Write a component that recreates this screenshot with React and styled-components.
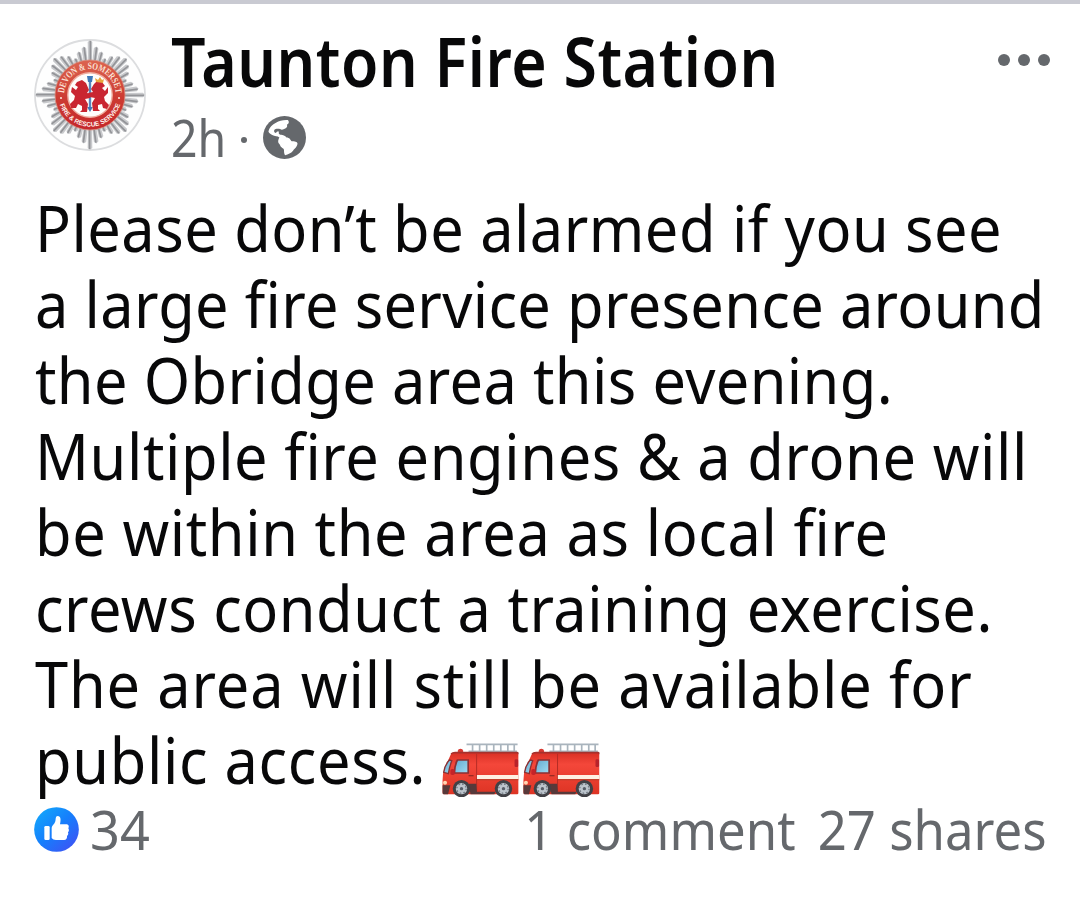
import styled, { createGlobalStyle } from "styled-components";

const COLORS = {
  text: "#080809",
  muted: "#65686c",
  divider: "#c9cad2",
};

const POST_LINES = [
  { text: "Please don’t be alarmed if you see", tracking: 0.5 },
  { text: "a large fire service presence around", tracking: 0.34 },
  { text: "the Obridge area this evening.", tracking: 0.39 },
  { text: "Multiple fire engines & a drone will", tracking: 0.64 },
  { text: "be within the area as local fire", tracking: 0.64 },
  { text: "crews conduct a training exercise.", tracking: 0.55 },
  { text: "The area will still be available for", tracking: 0.92 },
  { text: "public access. ", tracking: 0.72, engines: 2 },
];

// Rays of the badge, in eight stepped clusters of six
const RAY_COUNT = 48;
const RAY_LENGTHS = [52, 49, 45, 40, 45, 49];

const BadgeLogo = () => (
  <svg width="112" height="112" viewBox="-56 -56 112 112" aria-label="Devon & Somerset Fire & Rescue Service">
    <defs>
      <path id="badge-top" d="M-25.6 3 A25.8 25.8 0 1 1 25.6 3" />
      <path id="badge-bottom" d="M-31.6 0 A31.6 31.6 0 0 0 31.6 0" />
      <linearGradient id="badge-ring" x1="0" y1="0" x2="0" y2="1">
        <stop offset="0" stopColor="#dc6450" />
        <stop offset="0.55" stopColor="#cc3b32" />
        <stop offset="1" stopColor="#c5272b" />
      </linearGradient>
    </defs>
    <circle r="55" fill="#fefefe" stroke="#dcdddf" strokeWidth="1.8" />
    {Array.from({ length: RAY_COUNT }, (_, i) => {
      const length = i % 12 === 0 ? 55 : RAY_LENGTHS[i % 6];
      return (
        <g key={i} transform={`rotate(${(i * 360) / RAY_COUNT})`}>
          <path d={`M-2 -30 L-2.3 ${2 - length} L0 ${-length} L2.3 ${2 - length} L2 -30Z`} fill="#c9cacd" />
          <path d={`M0.4 -30 V${1 - length}`} stroke="#939498" strokeWidth="1.7" />
        </g>
      );
    })}
    <circle r="35" fill="url(#badge-ring)" stroke="#d98a7b" strokeWidth="0.8" />
    <circle r="22.2" fill="#fffdfb" stroke="#efaea0" strokeWidth="1.4" />
    <text fill="#fbe0d4" fontFamily="Liberation Serif, serif" fontWeight="700" fontSize="9.6" textAnchor="middle">
      <textPath href="#badge-top" startOffset="50%" textLength="78" lengthAdjust="spacingAndGlyphs">DEVON &amp; SOMERSET</textPath>
    </text>
    <text fill="#fff4ef" fontFamily="Liberation Sans, sans-serif" fontWeight="700" fontSize="6.6" textAnchor="middle">
      <textPath href="#badge-bottom" startOffset="50%" textLength="80" lengthAdjust="spacingAndGlyphs">FIRE &amp; RESCUE SERVICE</textPath>
    </text>
    <circle cx="-29" cy="3" r="1.1" fill="#fbe0d4" />
    <circle cx="29" cy="3" r="1.1" fill="#fbe0d4" />
    <path d="M0 -19 V15" stroke="#5686bd" strokeWidth="2.4" />
    <path d="M-3 -19 h6 l-1 6 h-4z M-2.8 12 h5.6 l-2.8 5z" fill="#3f79b8" />
    <path d="M-4 -12 l-4 -3 -5 2 -2 3 3 2 -2 3 -4 -3 -1 5 4 4 -1 4 -4 4 1 4 5 0 2 -4 4 2 0 4 -2 2 7 0 1 -8 -3 -5 5 -1 2 -4 -5 -1 2 -3z" fill="#c92531" />
    <path d="M4 -11 l3 -3 5 1 3 4 -3 2 3 3 3 -4 0 6 -4 4 1 4 4 4 -2 4 -4 -1 -1 -4 -4 1 0 4 2 2 -7 0 -1 -8 3 -5 -5 -1 -2 -4 5 -1 -2 -3z" fill="#c92531" />
    <path d="M6 -13 l-1 -4 3 2 2 -3 2 3 2 -1 -1 4z" fill="#eaa63c" />
  </svg>
);

const GlobeIcon = () => (
  <svg width="43" height="43" viewBox="0 0 126 126" aria-label="Public">
    <circle cx="63" cy="63" r="63" fill={COLORS.muted} />
    <path
      d="M73 12C77 16 77 22 70 26C73 31 69 36 62 38C57 40 55 42 50 38C44 37 35 37 33 41C31 46 35 50 38 50C39 46 43 44 47 46C45 50 46 53 51 55C56 54 64 57 69 63C78 63 80 70 84 74C93 74 100 75 101 80C101 91 93 94 88 102C82 110 74 112 65 115C60 109 63 100 60 96C50 90 51 86 48 82C42 76 45 69 48 63C43 58 34 61 27 56C22 51 18 51 16 46C18 34 28 25 38 20C48 14 59 11 73 12Z"
      fill="white"
    />
  </svg>
);

const LikeIcon = () => (
  <svg width="45" height="45" viewBox="0 0 135 135" aria-label="Like">
    <defs>
      <linearGradient id="like-fill" x1="0.1" y1="0.1" x2="0.85" y2="0.9">
        <stop offset="0" stopColor="#13a4fb" />
        <stop offset="0.5" stopColor="#167efc" />
        <stop offset="1" stopColor="#3a57f5" />
      </linearGradient>
    </defs>
    <circle cx="67.5" cy="67.5" r="67" fill="url(#like-fill)" />
    <rect x="31" y="57" width="16" height="42" rx="4" fill="white" />
    <path
      d="M53 93V62C53 57 62 51 64 43C66 36 64 27 71 27C81 27 81 38 78 52H97C104 52 106 59 103 64C106 69 105 73 102 76C104 81 102 85 99 87C100 94 97 99 90 99H66C60 99 56 97 53 93Z"
      fill="white"
    />
  </svg>
);

const FireEngine = () => (
  <Engine viewBox="0 0 227 162" preserveAspectRatio="none" aria-label="fire engine">
    <defs>
      <linearGradient id="engine-body" x1="0" y1="0" x2="0" y2="1">
        <stop offset="0" stopColor="#d93025" />
        <stop offset="0.28" stopColor="#f4473a" />
        <stop offset="1" stopColor="#dd3424" />
      </linearGradient>
      <linearGradient id="engine-glass" x1="0" y1="0" x2="1" y2="1">
        <stop offset="0" stopColor="#63a9cf" />
        <stop offset="1" stopColor="#a0dcf2" />
      </linearGradient>
    </defs>
    <path d="M72 4H224M78 25H222M90 4V26M111 4V26M132 4V26M153 4V26M174 4V26M195 4V26M214 4V26" stroke="#a9b4bd" strokeWidth="5" fill="none" />
    <path d="M46 32V23Q47 17 54 17Q61 17 62 23V32Z" fill="#d93a32" />
    <path d="M26 32Q30 29 38 29H222Q227 29 227 35V149Q227 154 222 154H4Q0 154 0 148V112Q0 90 8 73Z" fill="url(#engine-body)" />
    <path d="M26 33Q30 29 38 29H222Q227 29 227 34" stroke="#a6312d" strokeWidth="5" fill="none" />
    <path d="M102 32V145" stroke="#b62d26" strokeWidth="3" />
    <path d="M103 96H227V108H103Z" fill="#fff0e2" />
    <path d="M103 110H227" stroke="#b5422c" strokeWidth="3" />
    <path d="M21 51L28 53Q21 72 18 92L4 88Q7 66 21 51Z" fill="url(#engine-glass)" stroke="#8a3033" strokeWidth="4" />
    <path d="M45 51H77V90H36Q37 65 45 51Z" fill="url(#engine-glass)" stroke="#8a3033" strokeWidth="5" />
    <path d="M78 98H93" stroke="#81251f" strokeWidth="3" />
    <rect x="24" y="78" width="13" height="18" rx="5" fill="#c42429" />
    <rect x="215" y="49" width="11" height="23" rx="4" fill="#b8232b" />
    <path d="M0 127H24L17 154H4Q0 154 0 148ZM78 122H101L103 146H158L155 154H84Z" fill="#57393a" />
    <circle cx="8" cy="119" r="6" fill="#ffd4b2" />
    {[57, 182].map((x) => (
      <g key={x}>
        <circle cx={x} cy="137" r="26" fill="#414146" />
        <circle cx={x} cy="137" r="17" fill="#bcc4cc" />
        <circle cx={x} cy="137" r="14" fill="none" stroke="#737c85" strokeWidth="4" strokeDasharray="5 6" />
        <circle cx={x} cy="137" r="5" fill="#565e68" />
      </g>
    ))}
  </Engine>
);

const App = () => {
  return (
    <>
      <GlobalStyle />
      <Post>
        <Header>
          <Avatar>
            <BadgeLogo />
          </Avatar>
          <Heading>
            <Title>Taunton Fire Station</Title>
            <Meta>
              <Time>2h</Time>
              <Separator />
              <GlobeIcon />
            </Meta>
          </Heading>
          <MenuButton aria-label="More options">
            <Dot />
            <Dot />
            <Dot />
          </MenuButton>
        </Header>

        <Body>
          {POST_LINES.map(({ text, tracking, engines = 0 }) => (
            <Line
              key={text}
              $tracking={tracking}
            >
              {text}
              {Array.from({ length: engines }, (_, i) => (
                <FireEngine key={i} />
              ))}
            </Line>
          ))}
        </Body>

        <Footer>
          <Reactions>
            <LikeIcon />
            <Count>34</Count>
          </Reactions>
          <Stats>
            <span>1 comment</span>
            <span>27 shares</span>
          </Stats>
        </Footer>
      </Post>
    </>
  );
};

const GlobalStyle = createGlobalStyle`
  body {
    margin: 0;
    background-color: white;
    font-family: "Noto Sans", sans-serif;
    color: ${COLORS.text};
  }
`;

const Post = styled.article`
  box-sizing: border-box;
  height: 898px;
  padding: 26px 33px 0;
  border-top: 4px solid ${COLORS.divider};
  overflow: hidden;
`;

const Header = styled.header`
  display: flex;
  align-items: flex-start;
`;

const Avatar = styled.div`
  display: flex;
  margin: 9px 25px 0 1px;
`;

const Heading = styled.div`
  flex: 1;
  min-width: 0;
`;

const Title = styled.h1`
  margin: 0;
  font-size: 69px;
  font-weight: 600;
  line-height: 60px;
  letter-spacing: 0.6px;
  white-space: nowrap;
  transform: scaleX(0.88);
  transform-origin: left;
`;

const Meta = styled.div`
  display: flex;
  align-items: center;
  margin-top: 17px;
  height: 60px;
  color: ${COLORS.muted};
`;

const Time = styled.span`
  width: 70px;
  font-size: 51px;
  line-height: 60px;
  transform: scaleX(0.91);
  transform-origin: left;
`;

const Separator = styled.span`
  width: 6px;
  height: 6px;
  margin: 5px 16px 0 0;
  border-radius: 50%;
  background-color: ${COLORS.muted};
`;

const MenuButton = styled.button`
  display: flex;
  gap: 8px;
  margin: 24px -3px 0 0;
  padding: 0;
  border: none;
  background: none;
  cursor: pointer;
`;

const Dot = styled.span`
  width: 12px;
  height: 12px;
  border-radius: 50%;
  background-color: ${COLORS.muted};
`;

const Body = styled.div`
  margin-top: 23px;
  padding-left: 2px;
`;

const Line = styled.div`
  height: 76px;
  font-size: 64px;
  line-height: 76px;
  letter-spacing: ${(p) => p.$tracking}px;
  white-space: pre;
  transform: scaleX(0.93);
  transform-origin: left;
`;

const Engine = styled.svg`
  width: 82px;
  height: 54px;
  margin-right: 5px;
  vertical-align: -13px;
`;

const Footer = styled.footer`
  display: flex;
  justify-content: space-between;
  margin-top: 1px;
  height: 60px;
  font-size: 55px;
  line-height: 60px;
  color: ${COLORS.muted};
`;

const Reactions = styled.div`
  display: flex;
  align-items: center;
  gap: 11px;
  padding-left: 1px;
`;

const Count = styled.span`
  transform: scaleX(0.95);
  transform-origin: left;
`;

const Stats = styled.div`
  display: flex;
  gap: 24px;
  white-space: nowrap;
  transform: scaleX(0.925);
  transform-origin: right;
`;

export default App;
